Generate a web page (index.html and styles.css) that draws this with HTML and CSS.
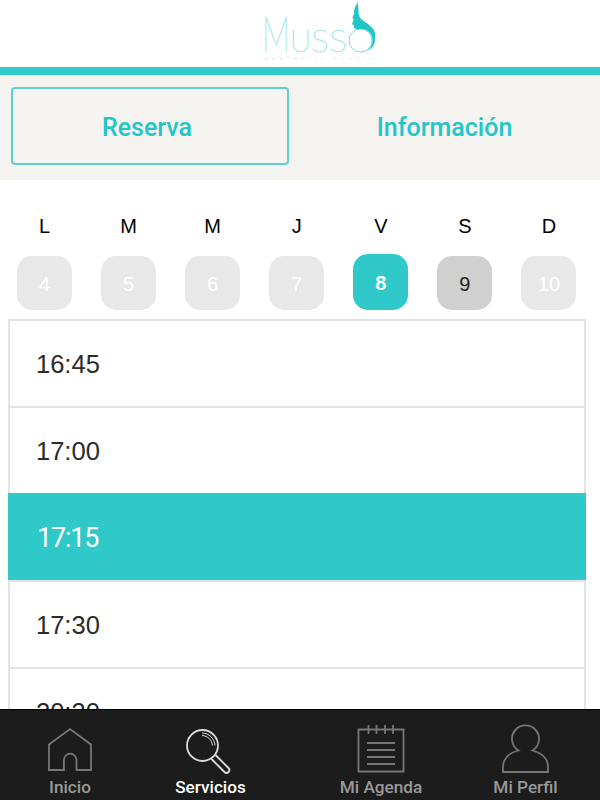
FILE: index.html
```html
<!DOCTYPE html>
<html lang="es">
<head>
    <meta charset="UTF-8">
    <meta name="viewport" content="width=device-width, initial-scale=1.0">
    <title>Musso - Reserva</title>
    <link rel="stylesheet" href="styles.css">
</head>
<body>
    <header class="cabecera">
        <svg class="logo" width="120" height="66" viewBox="260 0 120 66">
            <g class="logo-texto">
                <text x="262" y="52" font-size="50" textLength="28" lengthAdjust="spacingAndGlyphs">M</text>
                <text x="290" y="52" font-size="32" textLength="21" lengthAdjust="spacingAndGlyphs">U</text>
                <text x="311" y="52" font-size="32" textLength="18" lengthAdjust="spacingAndGlyphs">S</text>
                <text x="329" y="52" font-size="32" textLength="18" lengthAdjust="spacingAndGlyphs">S</text>
            </g>
            <circle class="logo-aro" cx="360.500" cy="40.500" r="11.500"/>
            <path class="logo-pelo" d="M357.500 2C355 7 353.500 10 354 14L352.500 17L353.500 20L352 24L354 25.500V28L357 29.500C366 27 373 33 372.500 41C372 46 370 49 366.500 51C372 49 375 45 375 39V33C374 27 366 23 361 19C359 17 358.500 14 358.500 11C358.800 7 357.500 5 357.500 2Z"/>
            <text class="logo-lema" x="265" y="60" textLength="107">AESTHETIC STUDIO</text>
        </svg>
    </header>

    <div class="pestanas">
        <div class="pestana activa">Reserva</div>
        <div class="pestana">Información</div>
    </div>

    <div class="semana">
        <div class="dia"><span>L</span><div class="numero">4</div></div>
        <div class="dia"><span>M</span><div class="numero">5</div></div>
        <div class="dia"><span>M</span><div class="numero">6</div></div>
        <div class="dia"><span>J</span><div class="numero">7</div></div>
        <div class="dia"><span>V</span><div class="numero elegido">8</div></div>
        <div class="dia"><span>S</span><div class="numero libre">9</div></div>
        <div class="dia"><span>D</span><div class="numero">10</div></div>
    </div>

    <div class="horas">
        <div class="hora">16:45</div>
        <div class="hora">17:00</div>
        <div class="hora elegida">17:15</div>
        <div class="hora">17:30</div>
        <div class="hora">20:30</div>
    </div>

    <nav class="menu">
        <div class="opcion inicio">
            <svg width="46" height="48" viewBox="0 0 46 48">
                <path d="M2 19.500L23 4L44 19.500V45H29.500V35a6.300 6.300 0 0 0-12.600 0V45H2Z"/>
            </svg>
            <span>Inicio</span>
        </div>
        <div class="opcion servicios activa">
            <svg width="46" height="48" viewBox="0 0 46 48">
                <circle cx="14.500" cy="20.500" r="15.500"/>
                <path class="brillo" d="M14 8C21 8 26.500 13.500 27 20.500M14 10.500C20 11 23.500 14.500 24.500 20.500"/>
                <path d="M23.500 34L36.500 47a2.700 2.700 0 0 0 4-4L27.500 30"/>
            </svg>
            <span>Servicios</span>
        </div>
        <div class="opcion agenda">
            <svg width="48" height="48" viewBox="0 0 48 48">
                <path d="M1.500 4.500H46.500V46.500H1.500ZM11.500 0V9M19.500 0V9M28 0V9M36 0V9M10 18H38M10 25H38M10 32H38M10 39H38"/>
            </svg>
            <span>Mi Agenda</span>
        </div>
        <div class="opcion perfil">
            <svg width="48" height="48" viewBox="0 0 48 48">
                <path d="M16.500 25.500A13.500 13.500 0 1 1 30.500 25.500C40 28 46 34 46 42V47H1V42C1 34 7 28 16.500 25.500Z"/>
            </svg>
            <span>Mi Perfil</span>
        </div>
    </nav>
</body>
</html>
```
FILE: styles.css
```css
* {
    box-sizing: border-box;
}
body {
    margin: 0;
    height: 100vh;
    display: flex;
    flex-direction: column;
    background-color: white;
    font-family: "Liberation Sans", Arial, sans-serif;
    overflow: hidden;
}
.cabecera {
    flex: none;
    height: 75px;
    padding-left: 260px;
    border-bottom: 8px solid #2fc9ca;
}
.logo {
    display: block;
}
.logo-texto {
    font-family: Lato, sans-serif;
    font-weight: 100;
    fill: #a5e5e6;
    stroke: #a5e5e6;
    stroke-width: 0.6;
}
.logo-aro {
    fill: none;
    stroke: #7fdcdd;
    stroke-width: 1;
}
.logo-pelo {
    fill: #22c6c9;
}
.logo-lema {
    font-size: 4px;
    fill: #c9eeee;
}
.pestanas {
    flex: none;
    height: 105px;
    padding: 12px 16px 15px 11px;
    display: flex;
    background-color: #f5f3ef;
}
.pestana {
    flex: 1;
    display: flex;
    justify-content: center;
    align-items: center;
    padding: 2px 0 0 16px;
    font-family: Roboto, sans-serif;
    font-size: 25px;
    font-weight: 500;
    color: #22c6c9;
    border: 2px solid transparent;
    border-radius: 4px;
}
.pestana.activa {
    flex: 0 0 278px;
    padding: 2px 6px 0 0;
    border-color: #5ed0d0;
}
.semana {
    flex: none;
    height: 139px;
    padding: 35px 9px 9px 2.5px;
    display: grid;
    grid-template-columns: repeat(7, 1fr);
}
.dia {
    display: flex;
    flex-direction: column;
    justify-content: space-between;
    align-items: center;
    font-size: 20px;
    color: black;
}
.numero {
    width: 55px;
    height: 54px;
    padding-top: 2px;
    border-radius: 15px;
    display: flex;
    justify-content: center;
    align-items: center;
    background-color: #e8e8e8;
    color: white;
}
.numero.elegido {
    height: 56px;
    background-color: #2fc9ca;
    font-weight: bold;
}
.numero.libre {
    background-color: #d0d0d0;
    color: #222;
}
.horas {
    flex: 1;
    min-height: 0;
    margin: 0 14px 0 8px;
    overflow: hidden;
}
.hora {
    height: 87px;
    padding: 1px 0 0 26px;
    display: flex;
    align-items: center;
    border: 2px solid #e3e3e3;
    border-bottom: none;
    font-size: 25.5px;
    color: #2b2b2b;
}
.hora.elegida {
    padding-left: 27px;
    border-color: #2fc9ca;
    background-color: #2fc9ca;
    font-family: Roboto, sans-serif;
    font-size: 27px;
    letter-spacing: -1.2px;
    color: white;
}
.menu {
    flex: none;
    height: 91px;
    display: flex;
    background-color: #1c1c1c;
    border-top: 1px solid black;
}
.opcion {
    display: flex;
    flex-direction: column;
    align-items: center;
    padding-top: 15px;
    color: #999;
    font-family: Roboto, sans-serif;
    font-size: 17.2px;
    font-weight: 500;
    line-height: 21px;
}
.opcion svg {
    overflow: visible;
    fill: none;
    stroke: #777;
    stroke-width: 1.8;
    margin-bottom: 4px;
}
.opcion.activa {
    color: white;
}
.opcion.activa svg {
    stroke: #ddd;
}
.opcion .brillo {
    stroke-width: 1;
}
.inicio {
    width: 140px;
}
.servicios {
    width: 141px;
}
.agenda {
    width: 200px;
}
.perfil {
    width: 89px;
}
```
